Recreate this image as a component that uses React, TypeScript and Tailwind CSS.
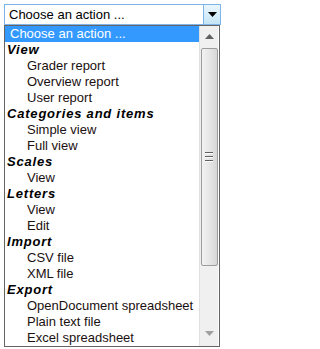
import React from "react";

type Row = { t: string; h?: boolean; sel?: boolean };

const rows: Row[] = [
  { t: "Choose an action ...", sel: true },
  { t: "View", h: true },
  { t: "Grader report" },
  { t: "Overview report" },
  { t: "User report" },
  { t: "Categories and items", h: true },
  { t: "Simple view" },
  { t: "Full view" },
  { t: "Scales", h: true },
  { t: "View" },
  { t: "Letters", h: true },
  { t: "View" },
  { t: "Edit" },
  { t: "Import", h: true },
  { t: "CSV file" },
  { t: "XML file" },
  { t: "Export", h: true },
  { t: "OpenDocument spreadsheet" },
  { t: "Plain text file" },
  { t: "Excel spreadsheet" },
];

export default function App() {
  return (
    <div className="w-[224px] h-[349px] bg-white overflow-hidden font-['Liberation_Sans',Arial,sans-serif] text-[13px] text-black">
      <div className="pt-[4px] pl-[4px]">
        <div className="w-[217px] h-[21px] border border-[#7eb4ea] bg-white flex">
          <div className="flex-1 pl-[4px] leading-[19px] whitespace-nowrap">Choose an action ...</div>
          <div className="w-[17px] h-[19px] bg-gradient-to-b from-[#eaf6fd] to-[#c4e5f6] border-l border-[#7eb4ea] flex items-center justify-center">
            <svg width="9" height="5" viewBox="0 0 9 5">
              <polygon points="0,0 9,0 4.5,5" fill="#000" />
            </svg>
          </div>
        </div>
      </div>
      <div className="ml-[4px] w-[216px] h-[322px] border border-[#646464] bg-white flex overflow-hidden">
        <div className="w-[194px] flex-none overflow-hidden">
          {rows.map((r, i) => (
            <div
              key={i}
              className={
                "h-[16px] leading-[16px] whitespace-nowrap " +
                (r.sel
                  ? "bg-[#3399ff] text-white pl-[5px]"
                  : r.h
                  ? "font-bold italic pl-[2px] tracking-[0.8px]"
                  : "pl-[22px] text-[#1a1010]")
              }
            >
              {r.t}
            </div>
          ))}
        </div>
        <div className="w-[19px] flex-none bg-[#f0f0f0] border-l border-[#e0e0e0] flex flex-col items-center">
          <div className="h-[17px] w-full flex items-center justify-center mt-[2px]">
            <svg width="9" height="5" viewBox="0 0 9 5">
              <polygon points="4.5,0 9,5 0,5" fill="#606060" />
            </svg>
          </div>
          <div className="mt-[3px] h-[218px] w-[17px] rounded-[2px] border border-[#9c9c9c] bg-gradient-to-r from-[#f2f2f2] via-[#e6e6e6] to-[#d6d6d6] flex flex-col items-center justify-center gap-[2px]">
            <div className="w-[8px] h-[1px] bg-[#606060] border-b border-white box-content" />
            <div className="w-[8px] h-[1px] bg-[#606060] border-b border-white box-content" />
            <div className="w-[8px] h-[1px] bg-[#606060] border-b border-white box-content" />
          </div>
          <div className="flex-1" />
          <div className="h-[17px] w-full flex items-center justify-center mb-[4px]">
            <svg width="9" height="5" viewBox="0 0 9 5">
              <polygon points="0,0 9,0 4.5,5" fill="#a0a0a0" />
            </svg>
          </div>
        </div>
      </div>
    </div>
  );
}
